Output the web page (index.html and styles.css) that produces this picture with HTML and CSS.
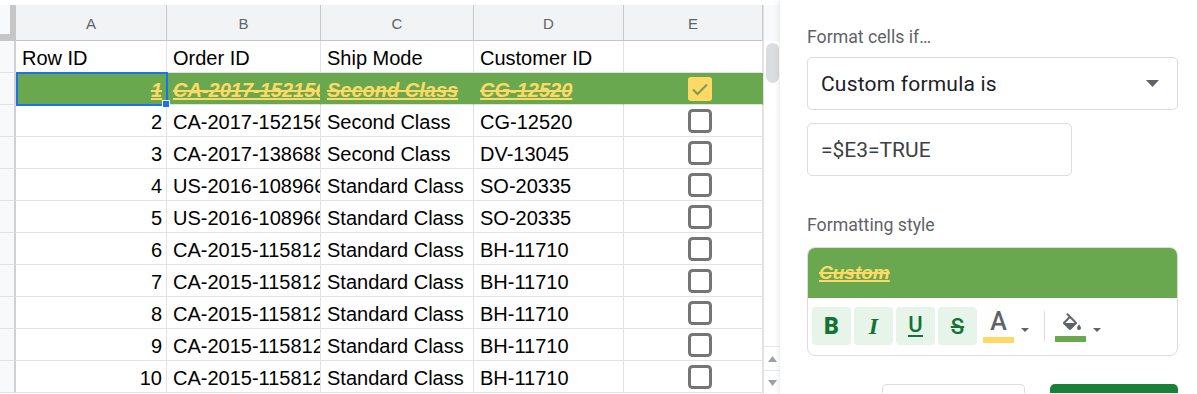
FILE: index.html
```html
<!DOCTYPE html>
<html>
<head>
<meta charset="utf-8">
<link rel="stylesheet" href="styles.css">
</head>
<body>
<div class="app">
  <div class="sheet">
    <div class="grid">
      <div class="c corner"></div>
      <div class="c h">A</div>
      <div class="c h">B</div>
      <div class="c h">C</div>
      <div class="c h">D</div>
      <div class="c h">E</div>

      <div class="c rn"></div>
      <div class="c">Row ID</div>
      <div class="c">Order ID</div>
      <div class="c">Ship Mode</div>
      <div class="c">Customer ID</div>
      <div class="c e"></div>

      <div class="c rn"></div>
      <div class="c num hit sel">1<span class="selbox"></span><span class="handle"></span></div>
      <div class="c hit">CA-2017-152156</div>
      <div class="c hit">Second Class</div>
      <div class="c hit">CG-12520</div>
      <div class="c e hit"><svg width="24" height="24" viewBox="0 0 24 24"><rect x="0" y="0" width="24" height="24" rx="3" fill="#ffd966"/><polyline points="5,12.5 9.5,17 19,7.5" fill="none" stroke="#7d9a55" stroke-width="2"/></svg></div>

      <div class="c rn"></div>
      <div class="c num">2</div>
      <div class="c">CA-2017-152156</div>
      <div class="c">Second Class</div>
      <div class="c">CG-12520</div>
      <div class="c e"><svg width="24" height="24" viewBox="0 0 24 24"><rect x="1.5" y="1.5" width="21" height="21" rx="3" fill="#fff" stroke="#757575" stroke-width="3"/></svg></div>

      <div class="c rn"></div>
      <div class="c num">3</div>
      <div class="c">CA-2017-138688</div>
      <div class="c">Second Class</div>
      <div class="c">DV-13045</div>
      <div class="c e"><svg width="24" height="24" viewBox="0 0 24 24"><rect x="1.5" y="1.5" width="21" height="21" rx="3" fill="#fff" stroke="#757575" stroke-width="3"/></svg></div>

      <div class="c rn"></div>
      <div class="c num">4</div>
      <div class="c">US-2016-108966</div>
      <div class="c">Standard Class</div>
      <div class="c">SO-20335</div>
      <div class="c e"><svg width="24" height="24" viewBox="0 0 24 24"><rect x="1.5" y="1.5" width="21" height="21" rx="3" fill="#fff" stroke="#757575" stroke-width="3"/></svg></div>

      <div class="c rn"></div>
      <div class="c num">5</div>
      <div class="c">US-2016-108966</div>
      <div class="c">Standard Class</div>
      <div class="c">SO-20335</div>
      <div class="c e"><svg width="24" height="24" viewBox="0 0 24 24"><rect x="1.5" y="1.5" width="21" height="21" rx="3" fill="#fff" stroke="#757575" stroke-width="3"/></svg></div>

      <div class="c rn"></div>
      <div class="c num">6</div>
      <div class="c">CA-2015-115812</div>
      <div class="c">Standard Class</div>
      <div class="c">BH-11710</div>
      <div class="c e"><svg width="24" height="24" viewBox="0 0 24 24"><rect x="1.5" y="1.5" width="21" height="21" rx="3" fill="#fff" stroke="#757575" stroke-width="3"/></svg></div>

      <div class="c rn"></div>
      <div class="c num">7</div>
      <div class="c">CA-2015-115812</div>
      <div class="c">Standard Class</div>
      <div class="c">BH-11710</div>
      <div class="c e"><svg width="24" height="24" viewBox="0 0 24 24"><rect x="1.5" y="1.5" width="21" height="21" rx="3" fill="#fff" stroke="#757575" stroke-width="3"/></svg></div>

      <div class="c rn"></div>
      <div class="c num">8</div>
      <div class="c">CA-2015-115812</div>
      <div class="c">Standard Class</div>
      <div class="c">BH-11710</div>
      <div class="c e"><svg width="24" height="24" viewBox="0 0 24 24"><rect x="1.5" y="1.5" width="21" height="21" rx="3" fill="#fff" stroke="#757575" stroke-width="3"/></svg></div>

      <div class="c rn"></div>
      <div class="c num">9</div>
      <div class="c">CA-2015-115812</div>
      <div class="c">Standard Class</div>
      <div class="c">BH-11710</div>
      <div class="c e"><svg width="24" height="24" viewBox="0 0 24 24"><rect x="1.5" y="1.5" width="21" height="21" rx="3" fill="#fff" stroke="#757575" stroke-width="3"/></svg></div>

      <div class="c rn"></div>
      <div class="c num">10</div>
      <div class="c">CA-2015-115812</div>
      <div class="c">Standard Class</div>
      <div class="c">BH-11710</div>
      <div class="c e"><svg width="24" height="24" viewBox="0 0 24 24"><rect x="1.5" y="1.5" width="21" height="21" rx="3" fill="#fff" stroke="#757575" stroke-width="3"/></svg></div>
    </div>
    <div class="vscroll">
      <div class="vs-top"></div>
      <div class="vs-thumb"></div>
      <div class="vs-fill"></div>
      <div class="vs-btn"><svg width="9" height="6" viewBox="0 0 9 6"><polygon points="0,6 9,6 4.5,0" fill="#9aa0a6"/></svg></div>
      <div class="vs-btn"><svg width="9" height="6" viewBox="0 0 9 6"><polygon points="0,0 9,0 4.5,6" fill="#9aa0a6"/></svg></div>
    </div>
  </div>

  <aside class="panel">
    <div class="label">Format cells if…</div>
    <div class="select">
      <span>Custom formula is</span>
      <svg width="13" height="7" viewBox="0 0 13 7"><polygon points="0,0 13,0 6.5,7" fill="#5f6368"/></svg>
    </div>
    <div class="input">=$E3=TRUE</div>
    <div class="label label2">Formatting style</div>
    <div class="stylebox">
      <div class="preview">Custom</div>
      <div class="toolbar">
        <div class="tb tb-b">B</div>
        <div class="tb tb-i">I</div>
        <div class="tb tb-u"><span>U</span></div>
        <div class="tb tb-s">S</div>
        <div class="colorctl">
          <div class="swatch">
            <span class="glyphA">A</span>
            <span class="bar yellow"></span>
          </div>
          <svg class="dd" width="8" height="4" viewBox="0 0 8 4"><polygon points="0,0 8,0 4,4" fill="#5f6368"/></svg>
        </div>
        <div class="sep"></div>
        <div class="colorctl fillctl">
          <div class="swatch">
            <svg class="bucket" width="24" height="21" viewBox="0 0 24 21"><path d="M16.56 8.94L7.62 0 6.21 1.41l2.38 2.38-5.15 5.15c-.59.59-.59 1.54 0 2.12l5.5 5.5c.29.29.68.44 1.06.44s.77-.15 1.06-.44l5.5-5.5c.59-.58.59-1.53 0-2.12zM5.21 10L10 5.21 14.79 10H5.21zM19 11.5s-2 2.17-2 3.5c0 1.1.9 2 2 2s2-.9 2-2c0-1.33-2-3.5-2-3.5z" fill="#5f6368"/></svg>
            <span class="bar green"></span>
          </div>
          <svg class="dd" width="8" height="4" viewBox="0 0 8 4"><polygon points="0,0 8,0 4,4" fill="#5f6368"/></svg>
        </div>
      </div>
    </div>
    <div class="actions">
      <div class="btn cancel"></div>
      <div class="btn done"></div>
    </div>
  </aside>
</div>
</body>
</html>
```

FILE: styles.css
```css
html, body {
  margin: 0;
  height: 394px;
  overflow: hidden;
  background: #fff;
}

.app {
  display: flex;
  height: 394px;
}

.sheet {
  display: flex;
  flex: none;
  width: 780px;
  padding-top: 5px;
  box-sizing: border-box;
}

.grid {
  display: grid;
  grid-template-columns: 16px 151px 154px 153px 150px 139px;
  grid-template-rows: 36px;
  grid-auto-rows: 32px;
  width: 763px;
  align-content: start;
  font-family: "Liberation Sans", Arial, sans-serif;
  font-size: 20px;
  color: #000;
}

.c {
  box-sizing: border-box;
  border-right: 1px solid #e2e2e2;
  border-bottom: 1px solid #e2e2e2;
  padding: 4px 4px 0 6px;
  line-height: 27px;
  white-space: nowrap;
  overflow: hidden;
}

.h {
  background: #f1f3f4;
  border-right-color: #c8c8c8;
  border-bottom-color: #c4c4c4;
  text-align: center;
  font-size: 15px;
  color: #5f6368;
  line-height: 33px;
  padding: 2px 0 0;
}

.corner {
  background: #f8f9fa;
  border-right: 6px solid #c6c6c6;
  border-bottom: 7px solid #c6c6c6;
  padding: 0;
}

.rn {
  background: #f8f9fa;
  border-right: 2px solid #d0d0d0;
  padding: 0;
}

.num {
  text-align: right;
}

.hit {
  background: #6aa84f;
  border-right-color: #6aa84f;
  color: #ffd966;
  font-weight: bold;
  font-style: italic;
  text-decoration: underline line-through;
  text-decoration-thickness: 2px;
}

.sel {
  position: relative;
  overflow: visible;
}

.selbox {
  position: absolute;
  top: -1px;
  left: 0;
  right: -2px;
  bottom: -2px;
  border: 2px solid #1a73e8;
}

.handle {
  position: absolute;
  right: -4px;
  bottom: -4px;
  width: 6px;
  height: 6px;
  background: #1a73e8;
  border: 1px solid #fff;
  z-index: 2;
}

.e {
  display: flex;
  align-items: center;
  justify-content: center;
  padding: 0 0 0 13px;
}

.e.hit {
  padding-top: 1px;
}

.vscroll {
  flex: none;
  width: 17px;
  border-left: 1px solid #e2e2e2;
  box-sizing: border-box;
  display: flex;
  flex-direction: column;
}

.vs-top {
  height: 36px;
  background: #f8f9fa;
  flex: none;
}

.vs-thumb {
  flex: none;
  height: 40px;
  margin: 2px 1px 0 2px;
  background: #dadce0;
  border-radius: 7px;
}

.vs-fill {
  flex: 1;
}

.vs-btn {
  flex: none;
  height: 23px;
  border-top: 1px solid #e8eaed;
  display: flex;
  align-items: center;
  justify-content: center;
}

/* Panel */
.panel {
  flex: 1;
  background: #fff;
  padding: 27px 19px 0 27px;
  box-shadow: -2px 0 4px rgba(0, 0, 0, 0.07);
  font-family: Roboto, "Noto Sans", sans-serif;
  overflow: hidden;
}

.label {
  font-size: 17.7px;
  line-height: 20px;
  color: #5f6368;
}

.label2 {
  margin-top: 39px;
}

.select {
  margin-top: 10px;
  height: 53px;
  box-sizing: border-box;
  border: 1px solid #dadce0;
  border-radius: 5px;
  display: flex;
  align-items: center;
  justify-content: space-between;
  padding: 0 18px 0 13px;
  font-size: 21px;
  color: #202124;
  letter-spacing: 0.2px;
}

.input {
  margin-top: 13px;
  width: 265px;
  height: 53px;
  box-sizing: border-box;
  border: 1px solid #dadce0;
  border-radius: 5px;
  display: flex;
  align-items: center;
  padding: 0 13px;
  font-size: 21px;
  color: #3c4043;
}

.stylebox {
  margin-top: 12px;
  border: 1px solid #dadce0;
  border-radius: 8px;
  overflow: hidden;
}

.preview {
  height: 51px;
  margin: -1px -1px 0;
  background: #6aa84f;
  padding: 0 12px;
  display: flex;
  align-items: center;
  font-family: "Liberation Sans", Arial, sans-serif;
  font-size: 19px;
  font-weight: bold;
  font-style: italic;
  color: #ffd966;
  text-decoration: underline line-through;
  text-decoration-thickness: 2px;
  border-radius: 8px 8px 0 0;
}

.toolbar {
  height: 57px;
  box-sizing: border-box;
  display: flex;
  align-items: flex-start;
  padding: 9px 0 0 4px;
  gap: 3px;
}

.tb {
  width: 39px;
  height: 38px;
  border-radius: 4px;
  background: #e6f4ea;
  color: #137333;
  display: flex;
  align-items: center;
  justify-content: center;
  font-family: Roboto, "Liberation Sans", sans-serif;
  font-size: 22px;
}

.tb-b {
  font-weight: 900;
  font-size: 23px;
}

.tb-i {
  font-family: "Liberation Serif", serif;
  font-style: italic;
  font-weight: bold;
  font-size: 24px;
}

.tb-u span {
  display: inline-block;
  line-height: 18px;
  border-bottom: 2.5px solid #137333;
  padding-bottom: 1px;
  font-weight: 500;
}

.tb-s {
  font-weight: 500;
  text-decoration: line-through;
  text-decoration-thickness: 2px;
}

.colorctl {
  display: flex;
  align-items: center;
  margin-left: 3px;
  gap: 7px;
}

.fillctl {
  margin-left: 0;
}

.swatch {
  width: 31px;
  display: flex;
  flex-direction: column;
  align-items: center;
}

.glyphA {
  font-size: 25px;
  font-weight: 500;
  line-height: 24px;
  color: #5f6368;
  height: 26px;
  margin-top: 3px;
}

.bar {
  display: block;
  width: 31px;
  height: 6px;
  margin-top: 1px;
}

.yellow {
  background: #ffd966;
}

.green {
  background: #6aa84f;
}

.bucket {
  margin-top: 6px;
  margin-bottom: 1px;
  margin-left: 2px;
}

.dd {
  margin-top: 10px;
}

.sep {
  width: 1px;
  height: 30px;
  margin: 4px 7px 0 12px;
  background: #dadce0;
}

.actions {
  margin-top: 28px;
  display: flex;
  gap: 25px;
  padding-left: 75px;
}

.btn {
  height: 9px;
  border-radius: 5px 5px 0 0;
  box-sizing: border-box;
}

.cancel {
  width: 144px;
  border: 1px solid #dadce0;
  border-bottom: none;
}

.done {
  width: 128px;
  background: #188038;
}
```
